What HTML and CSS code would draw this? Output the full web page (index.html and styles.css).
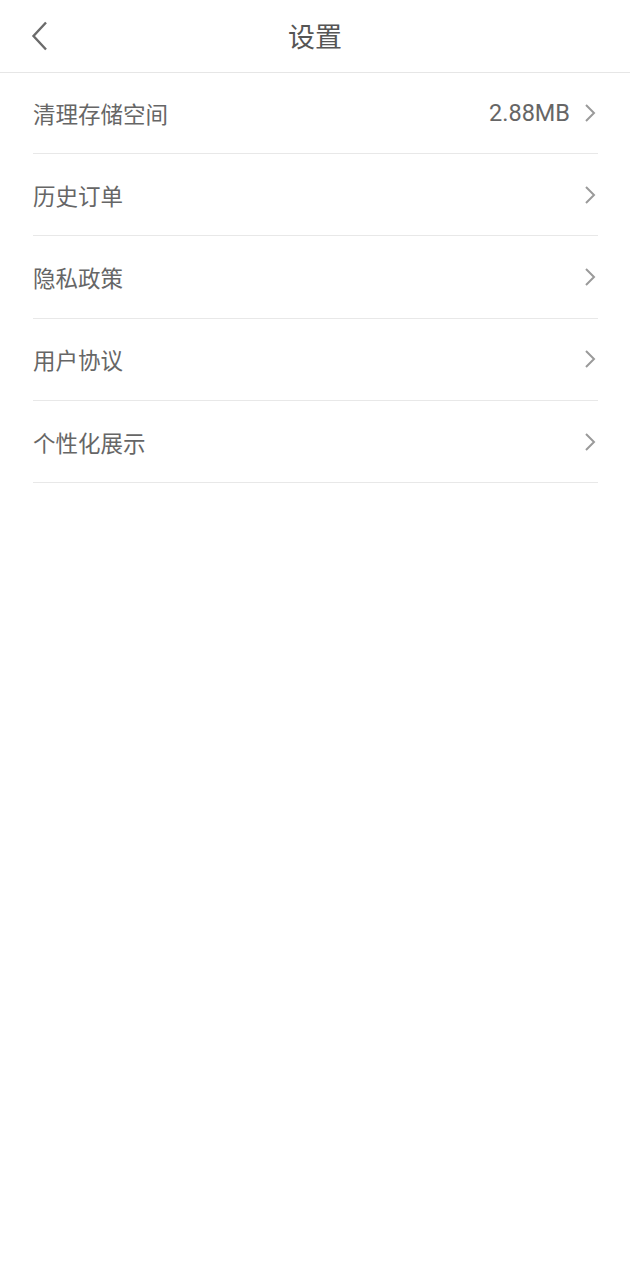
FILE: index.html
```html
<!DOCTYPE html>
<html lang="zh-CN">
<head>
    <meta charset="UTF-8">
    <meta name="viewport" content="width=device-width, initial-scale=1.0">
    <title>设置</title>
    <link rel="stylesheet" href="styles.css">
</head>
<body>
    <!-- Header -->
    <div class="header">
        <span class="back">
            <svg width="18" height="30" viewBox="0 0 18 30"><path d="M15 1.5 L2.5 15 L15 28.5" fill="none" stroke="#6b6b6b" stroke-width="2.4"/></svg>
        </span>
        <div class="title">设置</div>
    </div>

    <!-- Settings List -->
    <div class="list">
        <div class="row">
            <span class="label">清理存储空间</span>
            <span class="value">2.88MB</span>
            <svg class="arrow" width="12" height="20" viewBox="0 0 12 20"><path d="M2 2 L10 10 L2 18" fill="none" stroke="#9a9a9a" stroke-width="2"/></svg>
        </div>
        <div class="row">
            <span class="label">历史订单</span>
            <svg class="arrow" width="12" height="20" viewBox="0 0 12 20"><path d="M2 2 L10 10 L2 18" fill="none" stroke="#9a9a9a" stroke-width="2"/></svg>
        </div>
        <div class="row">
            <span class="label">隐私政策</span>
            <svg class="arrow" width="12" height="20" viewBox="0 0 12 20"><path d="M2 2 L10 10 L2 18" fill="none" stroke="#9a9a9a" stroke-width="2"/></svg>
        </div>
        <div class="row">
            <span class="label">用户协议</span>
            <svg class="arrow" width="12" height="20" viewBox="0 0 12 20"><path d="M2 2 L10 10 L2 18" fill="none" stroke="#9a9a9a" stroke-width="2"/></svg>
        </div>
        <div class="row">
            <span class="label">个性化展示</span>
            <svg class="arrow" width="12" height="20" viewBox="0 0 12 20"><path d="M2 2 L10 10 L2 18" fill="none" stroke="#9a9a9a" stroke-width="2"/></svg>
        </div>
    </div>
</body>
</html>
```

FILE: styles.css
```css
/* Base Styles */
* {
    box-sizing: border-box;
    margin: 0;
    padding: 0;
}

body {
    font-family: Roboto, "Noto Sans CJK SC", sans-serif;
    background: #ffffff;
    color: #666666;
}

/* Header */
.header {
    height: 73px;
    display: flex;
    align-items: center;
    justify-content: center;
    padding-bottom: 2px;
    border-bottom: 1px solid #e6e6e6;
    position: relative;
}

.back {
    position: absolute;
    left: 31px;
    top: 21px;
    display: flex;
}

.title {
    font-size: 27px;
    color: #555555;
}

/* List */
.list {
    padding: 0 32px 0 33px;
}

.row {
    height: 82.3px;
    display: flex;
    align-items: center;
    border-bottom: 1px solid #e8e8e8;
}

.row:first-child {
    height: 81px;
}

.label {
    flex: 1;
    font-size: 22.5px;
    color: #666666;
}

.value {
    font-size: 23.5px;
    color: #666666;
    margin-right: 14px;
}

.arrow {
    margin-right: 2px;
}
```
